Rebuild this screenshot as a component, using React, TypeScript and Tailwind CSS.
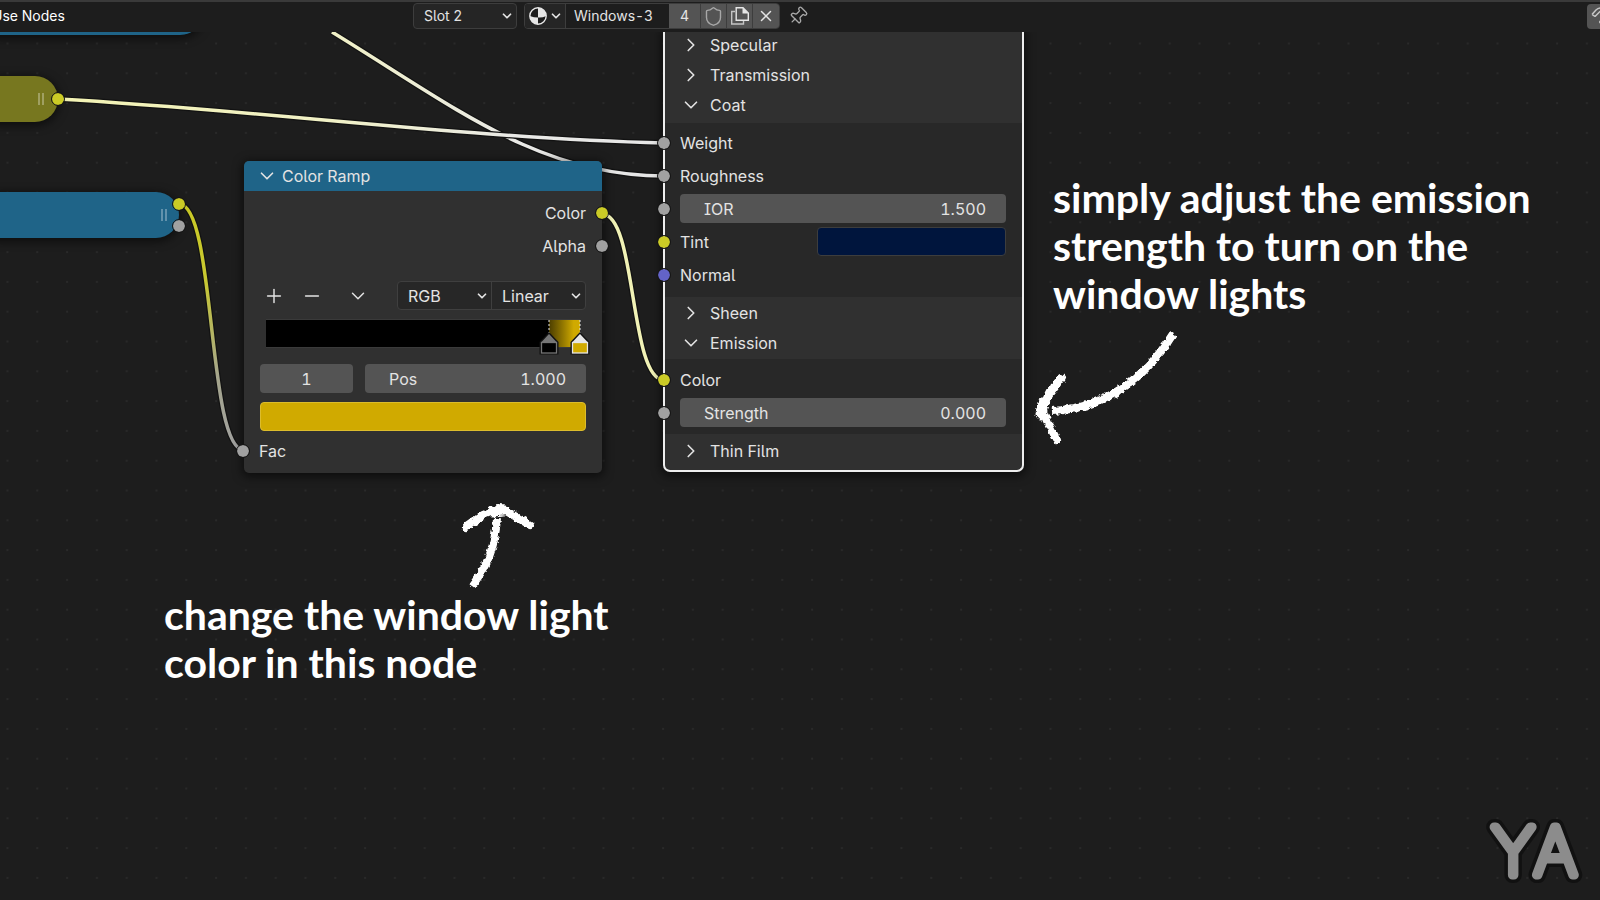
import type { ReactNode } from "react";
import { ChevronDown, ChevronRight, Minus, Pin, Plus, Shield, X } from "lucide-react";
import { cva } from "class-variance-authority";
import { clsx } from "clsx";

const socket = cva("absolute z-10 size-3 rounded-full outline outline-[#151515]", {
  variants: {
    kind: {
      color: "bg-[#cbcb26]",
      value: "bg-[#a1a1a1]",
      vector: "bg-[#6363c7]",
    },
    side: {
      in: "-left-[7px]",
      out: "-right-[6px]",
    },
  },
});

type SocketKind = "color" | "value" | "vector";

interface RowProps {
  kind: SocketKind;
  side?: "in" | "out";
  children: ReactNode;
}

/** One line of a node body with its socket sitting on the node's edge. */
function SocketRow({ kind, side = "in", children }: RowProps) {
  return (
    <div
      className={clsx(
        "relative flex h-[33px] items-center pl-[15px] pr-4",
        side === "out" && "justify-end",
      )}
    >
      <i className={socket({ kind, side })} />
      {children}
    </div>
  );
}

/** Number field: name on the left, value on the right. */
function NumberField({ label, value }: { label: string; value: string }) {
  return (
    <label className="flex h-[29px] min-w-0 flex-1 items-center rounded bg-[#545454] pl-6 pr-5">
      <span>{label}</span>
      <input
        defaultValue={value}
        className="min-w-0 flex-1 bg-transparent text-right outline-none"
      />
    </label>
  );
}

function PanelToggle({ label, open }: { label: string; open?: boolean }) {
  const Icon = open ? ChevronDown : ChevronRight;
  return (
    <button
      type="button"
      aria-expanded={!!open}
      className="flex h-[30px] w-full items-center gap-2 pl-[15px] text-left"
    >
      <Icon size={22} strokeWidth={1.8} aria-hidden />
      {label}
    </button>
  );
}

interface DropdownProps {
  label: string;
  value: string;
  className?: string;
}

function Dropdown({ label, value, className }: DropdownProps) {
  return (
    <div className={clsx("relative flex items-center", className)}>
      <select
        aria-label={label}
        defaultValue={value}
        className="h-full w-full appearance-none bg-transparent pl-[10px] outline-none"
      >
        <option>{value}</option>
      </select>
      <ChevronDown
        size={14}
        strokeWidth={3}
        className="pointer-events-none absolute right-[2px]"
        aria-hidden
      />
    </div>
  );
}

function MaterialIcon() {
  return (
    <svg width="20" height="20" viewBox="0 0 20 20" aria-hidden>
      <circle cx="10" cy="10" r="8.2" fill="#1d1d1d" stroke="#e6e6e6" strokeWidth="1.4" />
      <path d="M10 1.8A8.2 8.2 0 0 1 18.2 10Q14 12 10 11.5Z" fill="#e6e6e6" />
      <path d="M10 18.2A8.2 8.2 0 0 1 1.8 10Q6 11.500 10 11.500Z" fill="#e6e6e6" />
    </svg>
  );
}

function DuplicateIcon() {
  return (
    <svg width="20" height="20" viewBox="0 0 20 20" fill="none" aria-hidden>
      <path d="M5 5.500H1.700V18H13.500V15" stroke="#c4c4c4" strokeWidth="1.4" />
      <path d="M6.200 1.700H13L18.300 7V14.300H6.200Z" stroke="#e6e6e6" strokeWidth="1.4" />
      <path d="M12.500 1.700V7.500H18.300Z" fill="#e6e6e6" />
    </svg>
  );
}

function Header() {
  return (
    <header className="flex h-8 shrink-0 items-center overflow-hidden border-t-2 border-[#3a3a3a] bg-[#1d1d1d] pb-[2px] text-sm text-[#e3e3e3]">
      <span className="-ml-2 w-[421px] shrink-0 whitespace-nowrap text-white">Use Nodes</span>
      <Dropdown
        label="Render slot"
        value="Slot 2"
        className="h-[26px] w-[104px] shrink-0 rounded border border-[#3d3d3d] bg-[#252525]"
      />
      <div className="ml-[7px] flex h-[26px] shrink-0 overflow-hidden rounded border border-[#3d3d3d]">
        <button
          type="button"
          aria-label="Browse material"
          className="flex w-10 items-center justify-center gap-px bg-[#252525]"
        >
          <MaterialIcon />
          <ChevronDown size={14} strokeWidth={3} aria-hidden />
        </button>
        <input
          aria-label="Material name"
          defaultValue="Windows-3"
          className="w-[104px] border-l border-[#3d3d3d] bg-[#1d1d1d] pl-2 outline-none"
        />
        <div className="flex gap-px bg-[#3d3d3d]">
          <button type="button" aria-label="Users" className="w-[31px] bg-[#545454]">
            4
          </button>
          <button
            type="button"
            aria-label="Fake user"
            className="flex w-[25px] items-center justify-center bg-[#545454] text-[#a8a8a8]"
          >
            <Shield size={21} strokeWidth={1.6} aria-hidden />
          </button>
          <button
            type="button"
            aria-label="New material"
            className="flex w-[25px] items-center justify-center bg-[#545454]"
          >
            <DuplicateIcon />
          </button>
          <button
            type="button"
            aria-label="Unlink"
            className="flex w-[26px] items-center justify-center bg-[#545454]"
          >
            <X size={18} aria-hidden />
          </button>
        </div>
      </div>
      <button type="button" aria-label="Pin" className="ml-2 text-[#a8a8a8]">
        <Pin size={20} strokeWidth={1.6} className="rotate-45" aria-hidden />
      </button>
      <button
        type="button"
        aria-label="Snap"
        className="-mr-4 ml-auto flex h-[25px] w-[29px] shrink-0 items-center rounded bg-[#545454] pl-1"
      >
        <svg width="20" height="20" viewBox="0 0 20 20" fill="none" aria-hidden>
          <path
            d="M1 8.500L5 4C8 1 12 1.500 14 4M4 10.500L8 6.500C9.500 5 11 5 12.500 6.500M1 8.500L4 10.500"
            stroke="#c8c8c8"
            strokeWidth="1.5"
          />
          <circle cx="9.500" cy="16" r="1.500" fill="#c8c8c8" />
        </svg>
      </button>
    </header>
  );
}

const LINKS = [
  { d: "M332 0C456 76 540 144 664 144", stroke: "url(#pale)" },
  { d: "M58 67C260 78 462 106 664 111", stroke: "url(#pale)" },
  { d: "M179 172C216 172 207 418 244 418", stroke: "url(#fac)" },
  { d: "M602 182C637 182 629 348 664 348", stroke: "#f1f2b6" },
];

/** Dot grid and noodles under the nodes. */
function Backdrop() {
  return (
    <svg className="absolute inset-0 h-full w-full" aria-hidden>
      <defs>
        <pattern id="grid" x="-7.500" y="-3.400" width="29.800" height="29.800" patternUnits="userSpaceOnUse">
          <circle cx="15" cy="14.900" r="1.100" fill="#2b2b2b" />
        </pattern>
        <linearGradient id="pale" gradientUnits="userSpaceOnUse" x1="58" y1="0" x2="664" y2="0">
          <stop offset="0" stopColor="#f3f3b4" />
          <stop offset="0.450" stopColor="#f1f1c6" />
          <stop offset="0.750" stopColor="#e9e9e6" />
          <stop offset="1" stopColor="#e6e6e6" />
        </linearGradient>
        <linearGradient id="fac" gradientUnits="userSpaceOnUse" x1="0" y1="172" x2="0" y2="418">
          <stop offset="0" stopColor="#c9c926" />
          <stop offset="0.300" stopColor="#c9c930" />
          <stop offset="0.700" stopColor="#a5a58c" />
          <stop offset="1" stopColor="#a1a1a1" />
        </linearGradient>
      </defs>
      <rect width="100%" height="100%" fill="url(#grid)" />
      {LINKS.map(({ d, stroke }) => (
        <g key={d} fill="none">
          <path d={d} stroke="#121212" strokeWidth="6" />
          <path d={d} stroke={stroke} strokeWidth="3.500" />
        </g>
      ))}
    </svg>
  );
}

function Grip() {
  return <i className="h-3 w-[6px] border-x-2 border-white/30" />;
}

function RampStop({ fill, tip, className }: { fill: string; tip: string; className: string }) {
  return (
    <svg
      className={clsx("absolute top-0", className)}
      width="20"
      height="36"
      viewBox="0 0 20 36"
      aria-hidden
    >
      <path d="M10 0V14" stroke="#e6e6e6" strokeDasharray="2 2" />
      <path d="M10 12L19.500 22V34.500H0.500V22Z" fill="#111" />
      <path d="M10 14L17.500 22H2.500Z" fill={tip} />
      <rect x="2.500" y="22.500" width="15" height="10.500" fill={fill} stroke={tip} strokeWidth="1.300" />
    </svg>
  );
}

function ColorRampNode() {
  return (
    <section className="absolute left-[244px] top-[129px] w-[358px] rounded-[5px] bg-[#303030] pb-[6px] shadow-[0_2px_10px_2px_rgba(0,0,0,0.55)]">
      <h2 className="flex h-[30px] items-center gap-1 rounded-t-[5px] bg-[#1f6488] pl-3">
        <ChevronDown size={22} strokeWidth={1.8} aria-hidden />
        Color Ramp
      </h2>
      <div className="pt-[5px]">
        <SocketRow kind="color" side="out">Color</SocketRow>
        <SocketRow kind="value" side="out">Alpha</SocketRow>
      </div>
      <div className="mt-[19px] flex h-[29px] items-center pl-[19px] pr-4">
        <button type="button" aria-label="Add stop">
          <Plus size={22} strokeWidth={1.6} aria-hidden />
        </button>
        <button type="button" aria-label="Remove stop" className="ml-4">
          <Minus size={22} strokeWidth={1.6} aria-hidden />
        </button>
        <button type="button" aria-label="Ramp tools" className="ml-6">
          <ChevronDown size={22} strokeWidth={1.6} aria-hidden />
        </button>
        <div className="ml-auto flex h-[29px] rounded border border-[#3f3f3f] bg-[#272727]">
          <Dropdown label="Color mode" value="RGB" className="w-[93px]" />
          <Dropdown
            label="Interpolation"
            value="Linear"
            className="w-[94px] border-l border-[#3f3f3f]"
          />
        </div>
      </div>
      <div className="relative mx-[22px] mt-[9px] h-[29px] border-y border-[#3a3a3a] bg-linear-to-r from-[#4a3c00] from-90% to-[#d0aa00] to-98%">
        <div className="h-full w-[90%] bg-black" />
        <RampStop fill="#000000" tip="#767676" className="right-[21px]" />
        <RampStop fill="#d0aa00" tip="#e6e6e6" className="-right-[10px]" />
      </div>
      <div className="mx-4 mt-4 flex gap-3">
        <input
          aria-label="Active stop"
          defaultValue="1"
          className="h-[29px] w-[93px] rounded bg-[#545454] text-center outline-none"
        />
        <NumberField label="Pos" value="1.000" />
      </div>
      <div className="mt-[9px] flex px-4">
        <button
          type="button"
          aria-label="Stop color"
          className="h-[29px] flex-1 rounded border border-[#dcbc2c] bg-[#d0aa00]"
        />
      </div>
      <div className="mt-[3px]">
        <SocketRow kind="value">Fac</SocketRow>
      </div>
    </section>
  );
}

function ShaderNode() {
  return (
    <section className="absolute -top-[2px] left-[663px] w-[361px] rounded-b-[7px] border-2 border-t-0 border-[#eeeeee] bg-[#303030] pb-1 shadow-[0_2px_10px_2px_rgba(0,0,0,0.55)]">
      <div className="pb-[3px]">
        <PanelToggle label="Specular" />
        <PanelToggle label="Transmission" />
        <PanelToggle label="Coat" open />
      </div>
      <div className="bg-[#282828] pb-[6px] pt-[3px]">
        <SocketRow kind="value">Weight</SocketRow>
        <SocketRow kind="value">Roughness</SocketRow>
        <SocketRow kind="value">
          <NumberField label="IOR" value="1.500" />
        </SocketRow>
        <SocketRow kind="color">
          Tint
          <button
            type="button"
            aria-label="Tint color"
            className="ml-auto h-[29px] w-[189px] rounded border border-[#3d3d3d] bg-[#00153d]"
          />
        </SocketRow>
        <SocketRow kind="vector">Normal</SocketRow>
      </div>
      <div className="py-px">
        <PanelToggle label="Sheen" />
        <PanelToggle label="Emission" open />
      </div>
      <div className="bg-[#282828] pb-[5px] pt-1">
        <SocketRow kind="color">Color</SocketRow>
        <SocketRow kind="value">
          <NumberField label="Strength" value="0.000" />
        </SocketRow>
      </div>
      <div className="pt-[2px]">
        <PanelToggle label="Thin Film" />
      </div>
    </section>
  );
}

/** Chalk arrows pointing from the notes to the nodes. */
function Arrows() {
  return (
    <svg className="pointer-events-none absolute inset-0 h-full w-full" aria-hidden>
      <filter id="chalk" x="-10%" y="-10%" width="120%" height="120%">
        <feTurbulence type="fractalNoise" baseFrequency="0.250" numOctaves="2" seed="4" />
        <feDisplacementMap in="SourceGraphic" scale="5" xChannelSelector="R" yChannelSelector="G" />
      </filter>
      <g fill="none" stroke="#ffffff" strokeWidth="8" strokeLinejoin="round" filter="url(#chalk)">
        <path d="M1173 302C1146 345 1108 376 1052 379" />
        <path d="M1061 346L1049 362L1042 377L1047 389L1057 408" strokeLinecap="round" />
        <path d="M1043 371L1041 382" strokeWidth="11" strokeLinecap="round" />
        <path d="M472 554C486 535 495 518 497 486" />
        <path d="M466 495L483 483L501 476L513 483L530 493" strokeLinecap="round" />
        <path d="M493 479L504 478" strokeWidth="11" strokeLinecap="round" />
      </g>
    </svg>
  );
}

/** Corner monogram, rounded by a fat stroke round thin letters. */
function Monogram() {
  return (
    <svg
      className="absolute bottom-4 right-2 overflow-visible text-[66px] font-thin [font-kerning:none]"
      width="110"
      height="72"
      strokeLinejoin="round"
      strokeLinecap="round"
      role="img"
      aria-label="YA"
    >
      <text x="10" y="63" fill="#111" stroke="#111" strokeWidth="16" aria-hidden>
        YA
      </text>
      <text x="10" y="63" fill="#8c8c8c" stroke="#8c8c8c" strokeWidth="9">
        YA
      </text>
    </svg>
  );
}

export default function App() {
  return (
    <div className="flex h-screen min-h-[560px] flex-col overflow-hidden bg-[#1d1d1d] font-['Inter',sans-serif] text-[#e3e3e3] [font-feature-settings:'tnum','cv05','cv08']">
      <Header />
      <main className="relative flex-1 overflow-hidden text-base">
        <Backdrop />

        <div className="absolute -left-6 -top-[43px] h-[46px] w-[227px] rounded-full bg-[#1f6488] shadow-[0_2px_8px_2px_rgba(0,0,0,0.5)]" />
        <div className="absolute -left-6 top-[44px] flex h-[46px] w-[82px] items-center justify-end rounded-full bg-[#77771f] pr-[14px] shadow-[0_2px_8px_2px_rgba(0,0,0,0.5)]">
          <Grip />
          <i className={socket({ kind: "color", side: "out" })} />
        </div>
        <div className="absolute -left-6 top-[160px] flex h-[46px] w-[203px] items-center justify-end rounded-full bg-[#1f6488] pr-[12px] shadow-[0_2px_8px_2px_rgba(0,0,0,0.5)]">
          <Grip />
          <i className={clsx(socket({ kind: "color", side: "out" }), "top-[6px]")} />
          <i className={clsx(socket({ kind: "value", side: "out" }), "top-[28px]")} />
        </div>

        <ColorRampNode />
        <ShaderNode />

        <p className="absolute left-[1053px] top-[142px] w-[500px] font-['Lato',sans-serif] text-[41px] font-bold leading-[48px] text-white">
          simply adjust the emission strength to turn on the window lights
        </p>
        <p className="absolute left-[164px] top-[559px] w-[460px] font-['Lato',sans-serif] text-[41px] font-bold leading-[48px] text-white">
          change the window light color in this node
        </p>
        <Arrows />
        <Monogram />
      </main>
    </div>
  );
}
